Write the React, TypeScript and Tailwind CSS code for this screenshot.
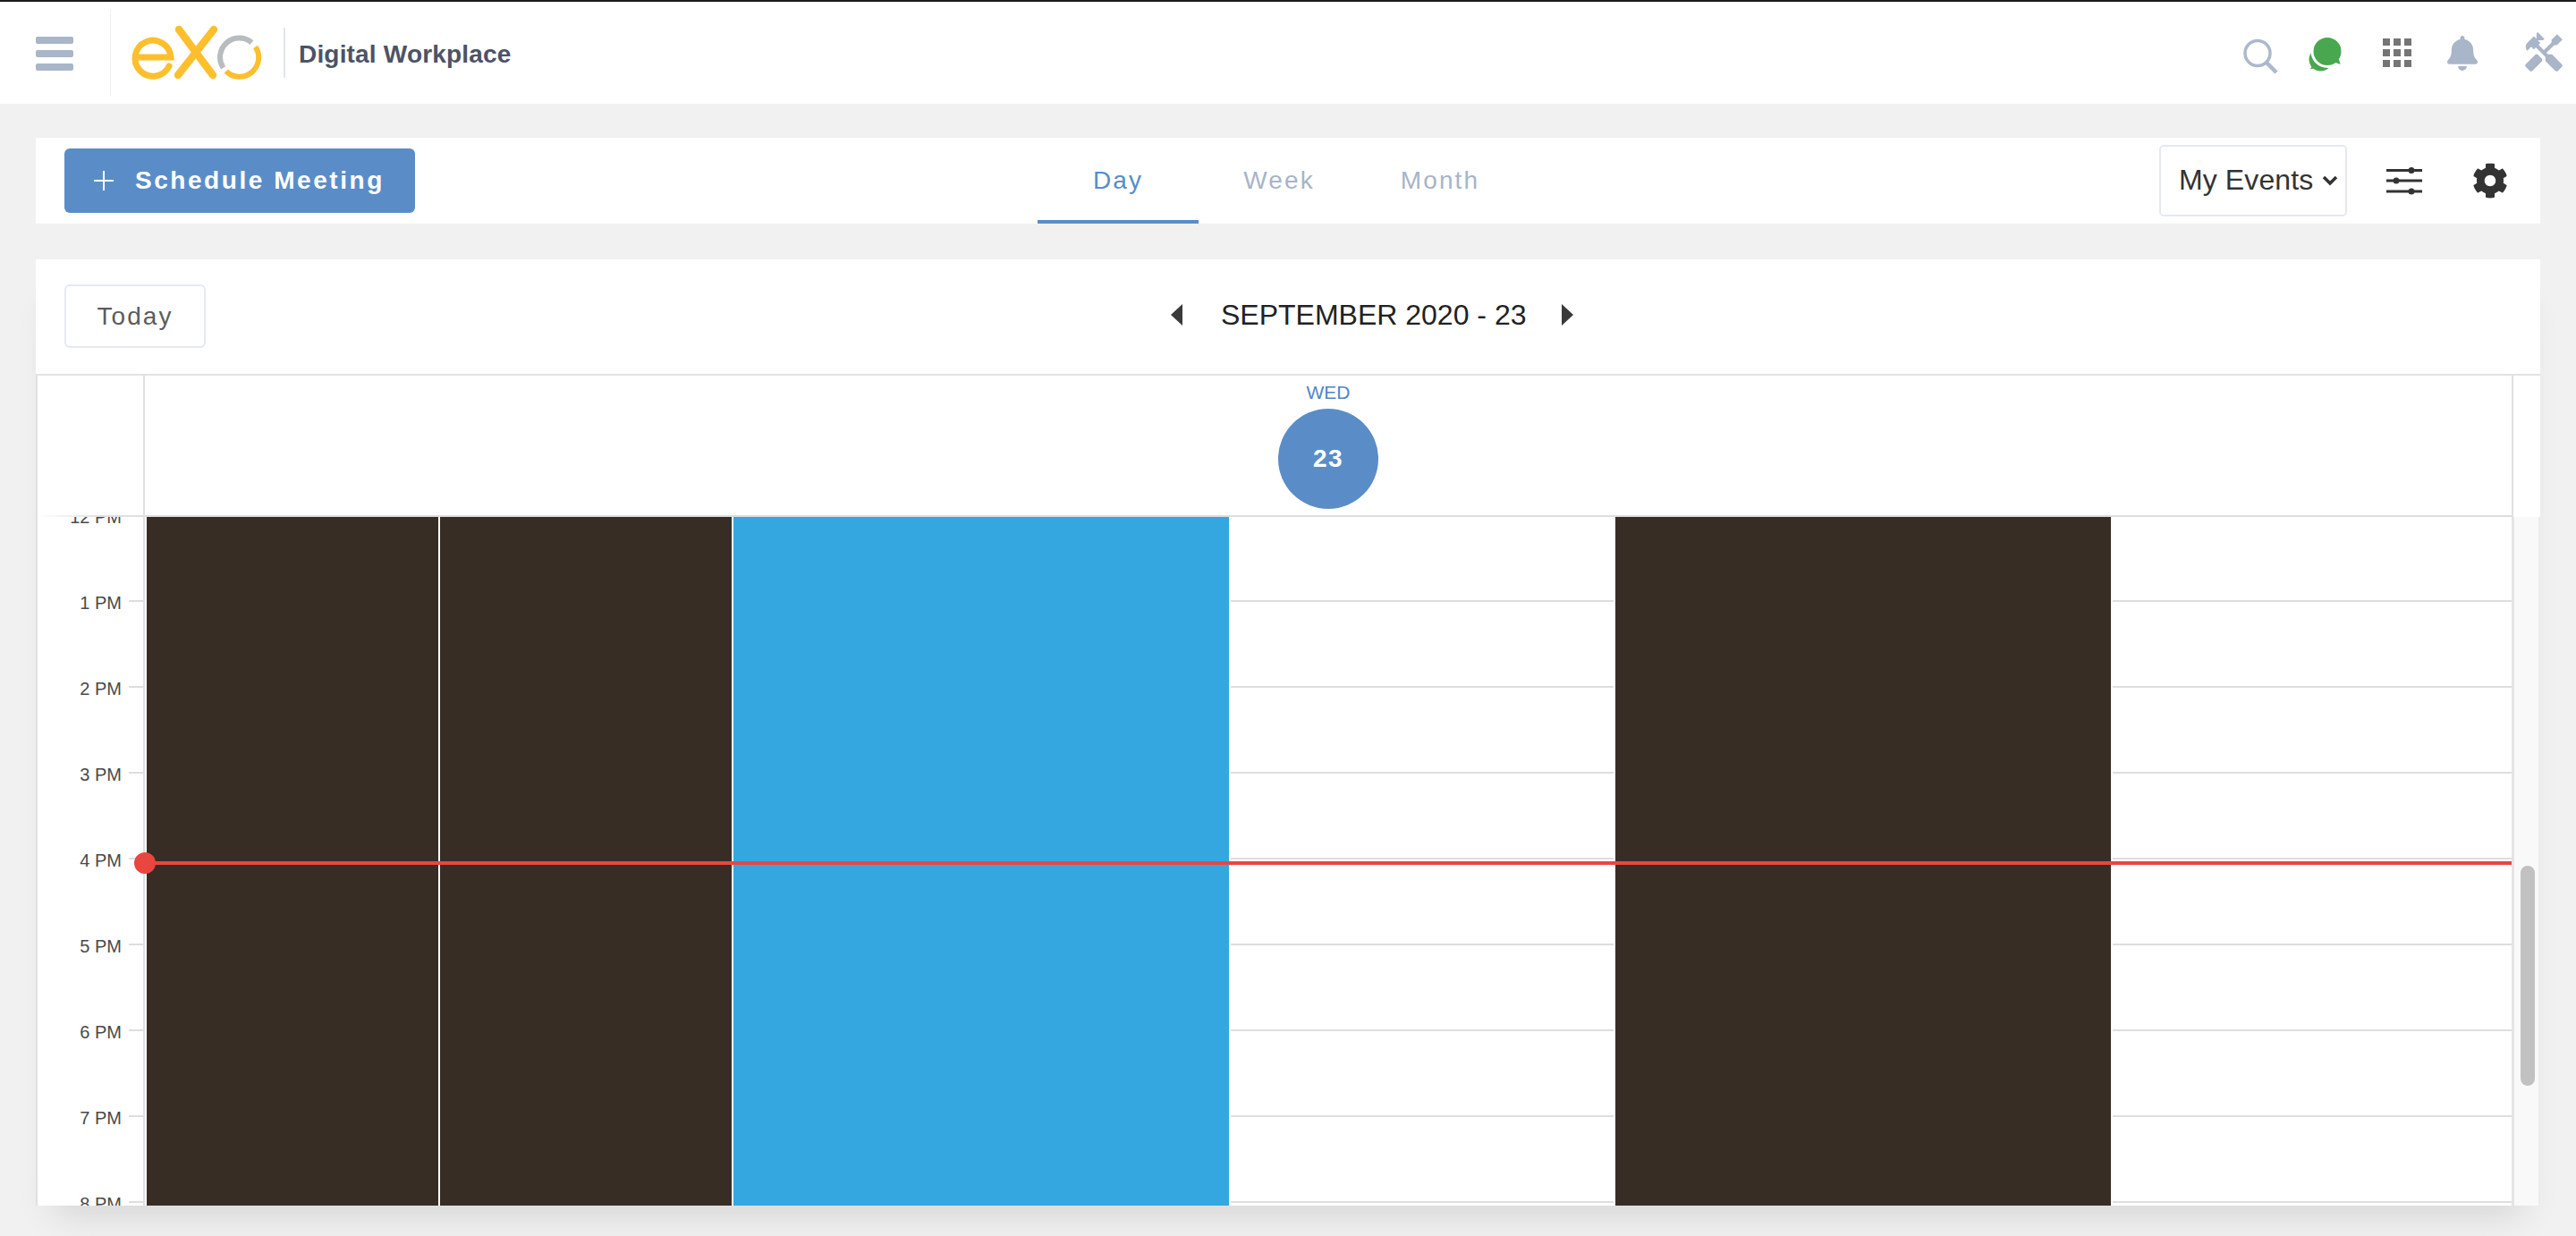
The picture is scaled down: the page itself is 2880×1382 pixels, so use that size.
import { FaBell, FaCog } from "react-icons/fa";
import { MdHandyman } from "react-icons/md";

const hours = ["12 PM", "1 PM", "2 PM", "3 PM", "4 PM", "5 PM", "6 PM", "7 PM", "8 PM"];
const rows = [1, 2, 3, 4, 5, 6, 7, 8];

function Logo() {
  return (
    <svg width="170" height="80" viewBox="0 0 170 80" fill="none" className="shrink-0">
      <path d="M12.5 45 H51 A20 20 0 1 0 49 55" stroke="#fdbf2d" strokeWidth="7" strokeLinecap="round" />
      <path d="M60 14 L98 65 M99 14 L59 65" stroke="#fdbf2d" strokeWidth="8.5" strokeLinecap="round" />
      <path d="M109.6 56.9 A21.5 21.5 0 0 1 141.4 28.6" stroke="#b9bcbf" strokeWidth="6" />
      <path d="M145.6 33.4 A21.5 21.5 0 0 1 112.7 60.7" stroke="#fdbf2d" strokeWidth="6" />
    </svg>
  );
}

function HeaderIcons() {
  return (
    <div className="ml-auto flex items-center">
      <svg width="60" height="60" viewBox="0 0 60 60" fill="none" className="shrink-0">
        <circle cx="24" cy="30.5" r="14" stroke="#adb9cb" strokeWidth="3.5" />
        <path d="M34 41 L45 52" stroke="#adb9cb" strokeWidth="4.5" />
      </svg>
      <svg width="60" height="60" viewBox="70 0 60 60" className="ml-[10px] shrink-0">
        <circle cx="94.5" cy="37.5" r="13" fill="#49a84f" />
        <path d="M83 48.5 L87 40 L92 46 Z" fill="#49a84f" />
        <circle cx="102" cy="28.5" r="18.5" fill="#fff" />
        <circle cx="102" cy="28.5" r="15.5" fill="#49a84f" />
        <path d="M108.5 40 L116.5 43 L113.5 32 Z" fill="#49a84f" />
      </svg>
      <div className="ml-[34px] grid w-[32px] grid-cols-3 gap-[4px]">
        {[0, 1, 2, 3, 4, 5, 6, 7, 8].map((i) => (
          <div key={i} className="h-[8px] w-[8px] bg-[#757575]" />
        ))}
      </div>
      <FaBell className="ml-[40px] h-[39px] w-[34px] shrink-0 text-[#a9b5c8]" />
      <MdHandyman className="ml-[49px] mr-[11px] h-[50px] w-[50px] shrink-0 -scale-x-100 text-[#a9b5c8]" />
    </div>
  );
}

function Header() {
  return (
    <header className="flex h-[114px] items-center bg-white">
      <div className="ml-[40px] mt-[2px] flex w-[42px] flex-col gap-[7.5px]">
        <div className="h-[7.5px] rounded-[2px] bg-[#a9b5c8]" />
        <div className="h-[7.5px] rounded-[2px] bg-[#a9b5c8]" />
        <div className="h-[7.5px] rounded-[2px] bg-[#a9b5c8]" />
      </div>
      <div className="ml-[41px] h-[96px] w-[1px] bg-[#eeeeee]" />
      <div className="ml-[16px]">
        <Logo />
      </div>
      <div className="ml-[7px] h-[56px] w-[2px] bg-[#dfe5ee]" />
      <div className="ml-[15px] pt-[3px] text-[28px] font-bold tracking-[0.18px] text-[#4c5366]">Digital Workplace</div>
      <HeaderIcons />
    </header>
  );
}

function Toolbar() {
  return (
    <section className="flex h-[96px] items-center bg-white">
      <div className="w-[1120px] pl-[32px]">
        <button className="flex h-[72px] w-[392px] items-center rounded-[6px] bg-[#5a8dc8] pl-[33px] text-[28px] font-bold tracking-[2.55px] text-white">
          <svg width="22" height="22" viewBox="0 0 22 22" className="shrink-0">
            <path d="M11 0 V22 M0 11 H22" stroke="#fff" strokeWidth="2" />
          </svg>
          <span className="ml-[24px]">Schedule Meeting</span>
        </button>
      </div>
      <nav className="flex h-full text-[28px] tracking-[2.1px]">
        <div className="flex w-[180px] items-center justify-center border-b-4 border-[#578dc9] pt-[4px] text-[#578dc9]">Day</div>
        <div className="flex w-[180px] items-center justify-center border-b-4 border-transparent pt-[4px] text-[#a8b4c8]">Week</div>
        <div className="flex w-[180px] items-center justify-center border-b-4 border-transparent pt-[4px] text-[#a8b4c8]">Month</div>
      </nav>
      <div className="ml-auto flex items-center pr-[36px]">
        <div className="flex h-[80px] w-[210px] items-center rounded-[5px] border-2 border-[#e4e9f0] pl-[20px] text-[32px] text-[#333333]">
          <span className="mb-[2px] tracking-[0.1px]">My Events</span>
          <svg width="18" height="12" viewBox="0 0 18 12" fill="none" className="ml-[10px] shrink-0">
            <path d="M2 2 L9 9 L16 2" stroke="#333333" strokeWidth="3.5" />
          </svg>
        </div>
        <svg width="40" height="32" viewBox="0 0 40 32" className="ml-[44px] shrink-0">
          <path d="M0 4.5 H40 M0 16 H40 M0 28 H40" stroke="#333333" strokeWidth="3" />
          <circle cx="28" cy="4.5" r="3.5" fill="#333333" />
          <circle cx="11" cy="16" r="3.5" fill="#333333" />
          <circle cx="28" cy="28" r="3.5" fill="#333333" />
        </svg>
        <FaCog className="ml-[56px] h-[40px] w-[40px] shrink-0 text-[#333333]" />
      </div>
    </section>
  );
}

function CalendarBar() {
  return (
    <div className="flex h-[130px] items-start border-b-2 border-[#e2e2e2] pl-[32px] pt-[28px]">
      <button className="h-[71px] w-[158px] rounded-[6px] border-2 border-[#e5e9f0] text-[28px] tracking-[2.1px] text-[#5c5c5c]">
        Today
      </button>
      <div className="ml-[1079px] mt-[11px] flex h-[46px] items-center text-[32px] text-[#222222]">
        <svg width="13" height="24" viewBox="0 0 13 24" className="shrink-0">
          <path d="M13 0 V24 L0 12 Z" fill="#3a3a3a" />
        </svg>
        <span className="ml-[43px] mr-[40px]">SEPTEMBER 2020 - 23</span>
        <svg width="13" height="24" viewBox="0 0 13 24" className="shrink-0">
          <path d="M0 0 V24 L13 12 Z" fill="#3a3a3a" />
        </svg>
      </div>
    </div>
  );
}

function DayHeader() {
  return (
    <div className="flex h-[158px] border-l-2 border-[#e0e0e0]">
      <div className="flex w-[120px] shrink-0 flex-col justify-end border-r-2 border-[#e0e0e0]">
        <div className="h-[2px] bg-linear-to-r from-white to-[#e0e0e0] to-60%" />
      </div>
      <div className="flex flex-1 flex-col items-center border-b-2 border-[#dedede] pt-[6px]">
        <div className="text-[21px] leading-[26px] text-[#4f86c6]">WED</div>
        <div className="mt-[5px] flex h-[112px] w-[112px] items-center justify-center rounded-full bg-[#5a8dc8] text-[28px] font-bold tracking-[1.4px] text-white">
          23
        </div>
      </div>
      <div className="w-[32px] shrink-0 border-l-2 border-[#e0e0e0]" />
    </div>
  );
}

function Gutter() {
  return (
    <div className="-mt-[48px] flex w-[120px] shrink-0 flex-col border-r-2 border-[#e0e0e0]">
      {hours.map((h) => (
        <div key={h} className="flex h-[96px] shrink-0 items-center justify-end text-[20px] text-[#4a4a4a]">
          <span>{h}</span>
          <div className="ml-[8px] h-[2px] w-[16px] -translate-y-[2px] bg-[#dedede]" />
        </div>
      ))}
    </div>
  );
}

function DayBody() {
  return (
    <div className="relative flex-1">
      <div className="h-[95px] border-b-2 border-[#dedede]" />
      {rows.map((r) => (
        <div key={r} className="h-[96px] border-b-2 border-[#dedede]" />
      ))}
      <div className="absolute bottom-0 left-[2px] top-0 w-[326px] bg-[#382d24] ring-2 ring-white" />
      <div className="absolute bottom-0 left-[330px] top-0 w-[326px] bg-[#382d24] ring-2 ring-white" />
      <div className="absolute bottom-0 left-[658px] top-0 w-[554px] bg-[#34a7e0] ring-2 ring-white" />
      <div className="absolute bottom-0 left-[1644px] top-0 w-[554px] bg-[#382d24] ring-2 ring-white" />
      <div className="absolute left-0 right-0 top-[385px] h-[4px] bg-[#ea4640]" />
      <div className="absolute -left-[12px] top-[375px] h-[24px] w-[24px] rounded-full bg-[#ea4640]" />
    </div>
  );
}

function ScrollTrack() {
  return (
    <div className="relative w-[32px] shrink-0 border-l-[3px] border-r-2 border-l-[#e4e4e4] border-r-[#ececec] bg-[#f9f9f9]">
      <div className="absolute left-[7px] top-[390px] h-[246px] w-[16px] rounded-[8px] bg-[#c1c1c1]" />
    </div>
  );
}

export default function App() {
  return (
    <div className="h-[1382px] w-[2880px] overflow-hidden border-t-2 border-[#1a1a1a] bg-[#f1f1f1] font-['Liberation_Sans',Arial,sans-serif]">
      <Header />
      <main className="px-[40px] pt-[38px]">
        <Toolbar />
        <section className="mt-[40px] flex h-[1058px] flex-col bg-white shadow-[0_30px_40px_-20px_rgba(0,0,0,0.12)]">
          <CalendarBar />
          <DayHeader />
          <div className="flex min-h-0 flex-1 overflow-hidden border-l-2 border-[#e0e0e0]">
            <Gutter />
            <DayBody />
            <ScrollTrack />
          </div>
        </section>
      </main>
    </div>
  );
}
